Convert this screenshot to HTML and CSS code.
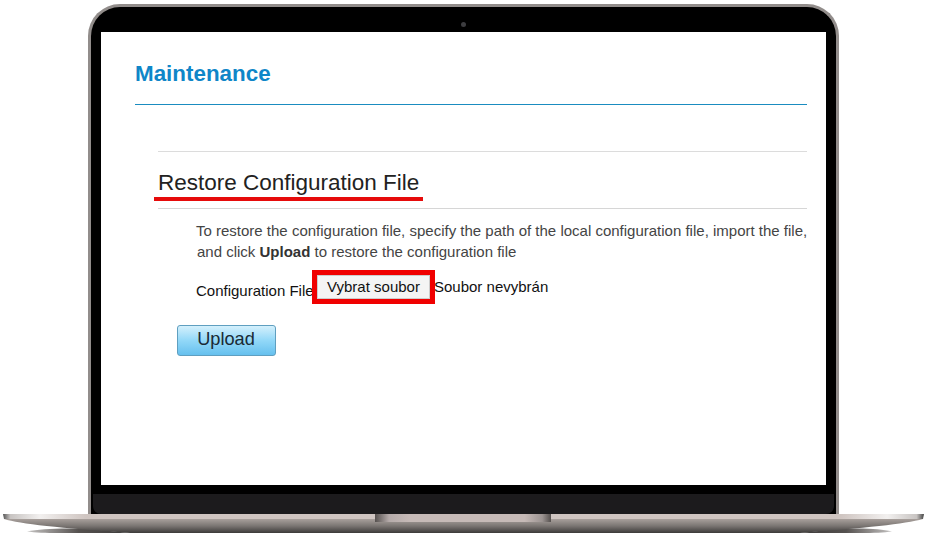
FILE: index.html
```html
<!DOCTYPE html>
<html lang="en">
  <head>
    <meta charset="UTF-8" />
    <meta name="viewport" content="width=device-width, initial-scale=1.0" />
    <title>Maintenance</title>
    <link rel="stylesheet" href="styles.css">
  </head>
  <body>
    <div class="laptop">
      <div class="lid">
        <div class="camera-row"><span class="camera"></span></div>
        <div class="screen">
          <h1>Maintenance</h1>
          <div class="section">
            <h2><span class="marked">Restore Configuration File</span></h2>
            <div class="section-body">
              <p class="intro">To restore the configuration file, specify the path of the local configuration file, import the file,</p>
              <p class="intro second">and click <strong>Upload</strong> to restore the configuration file</p>
              <div class="file-row">
                <label class="file-label">Configuration File</label>
                <span class="file-mark"><span class="file-button">Vybrat soubor</span></span>
                <span class="file-name">Soubor nevybrán</span>
              </div>
            </div>
            <button class="upload">Upload</button>
          </div>
        </div>
        <div class="chin"></div>
      </div>
      <svg class="base" width="927" height="23" viewBox="0 0 927 23">
        <defs>
          <linearGradient id="body" x1="0" y1="0" x2="0" y2="1">
            <stop offset="0" stop-color="#a8a09c" />
            <stop offset="0.5" stop-color="#7a7572" />
            <stop offset="1" stop-color="#3c3a39" />
          </linearGradient>
          <linearGradient id="top" x1="0" y1="0" x2="1" y2="0">
            <stop offset="0" stop-color="#555" />
            <stop offset="0.008" stop-color="#c8c4c2" />
            <stop offset="0.04" stop-color="#f2f0ef" />
            <stop offset="0.09" stop-color="#cfc5c1" />
            <stop offset="0.91" stop-color="#cfc5c1" />
            <stop offset="0.96" stop-color="#f2f0ef" />
            <stop offset="0.992" stop-color="#c8c4c2" />
            <stop offset="1" stop-color="#444" />
          </linearGradient>
          <linearGradient id="notch" x1="0" y1="0" x2="1" y2="0">
            <stop offset="0" stop-color="#55504e" />
            <stop offset="0.08" stop-color="#b5abaa" />
            <stop offset="0.2" stop-color="#c6bab7" />
            <stop offset="0.85" stop-color="#c6bab7" />
            <stop offset="0.95" stop-color="#9c9492" />
            <stop offset="1" stop-color="#55504e" />
          </linearGradient>
          <linearGradient id="shadow-left" x1="0" y1="0" x2="1" y2="0">
            <stop offset="0" stop-color="#c4c2c1" />
            <stop offset="0.5" stop-color="#55514f" />
            <stop offset="1" stop-color="#3c3a39" />
          </linearGradient>
          <linearGradient id="shadow-right" x1="0" y1="0" x2="1" y2="0">
            <stop offset="0" stop-color="#3c3a39" />
            <stop offset="0.5" stop-color="#55514f" />
            <stop offset="1" stop-color="#c4c2c1" />
          </linearGradient>
        </defs>
        <path d="M27 17.5 C40 15 60 14 90 15 L130 19 H60 C45 19 35 18.5 27 17.5 Z" fill="url(#shadow-left)" />
        <path d="M800 19 L837 15 C867 14 880 15 892 17.5 C884 18.5 874 19 860 19 Z" fill="url(#shadow-right)" />
        <path d="M4 5 C20 10 60 14 130 19 H800 C865 14 905 10 923 5 Z" fill="url(#body)" />
        <path d="M3 0 H924 L923 5 H4 Z" fill="url(#top)" />
        <rect x="375" y="0" width="176" height="8" fill="url(#notch)" />
      </svg>
    </div>
  </body>
</html>
```

FILE: styles.css
```css
html,
body {
  margin: 0;
  background: white;
}
body {
  width: 927px;
  height: 537px;
  overflow: hidden;
  font-family: "Liberation Sans", Arial, sans-serif;
}
.laptop {
  padding-top: 4px;
}
.lid {
  box-sizing: border-box;
  width: 751px;
  height: 510px;
  margin-left: 88px;
  background: black;
  border: 3px solid #928d8b;
  border-bottom: 0;
  border-radius: 32px 32px 0 0;
  padding: 0 10px;
}
.camera-row {
  display: flex;
  justify-content: center;
  align-items: center;
  height: 25px;
  padding: 9px 1px 0 0;
  box-sizing: border-box;
}
.camera {
  width: 5px;
  height: 5px;
  border-radius: 50%;
  background: #3d3d40;
}
.screen {
  box-sizing: border-box;
  height: 453px;
  background: white;
  padding: 29px 19px 0 34px;
}
.chin {
  height: 20px;
  margin: 9px -8px 0;
  background: #1c1b1d;
  border-radius: 0 0 8px 8px;
}
.base {
  display: block;
}
h1 {
  margin: 0;
  height: 43px;
  font-size: 22.4px;
  line-height: 25px;
  font-weight: bold;
  color: #0f86c8;
  border-bottom: 1px solid #1a8cc0;
}
.section {
  margin: 46px 0 0 23px;
  border-top: 1px solid #dcdcdc;
}
h2 {
  margin: 0;
  height: 57px;
  box-sizing: border-box;
  padding-top: 18px;
  font-size: 22.5px;
  line-height: 26px;
  font-weight: normal;
  color: #222;
  border-bottom: 1px solid #d6d6d6;
}
.marked {
  display: inline-block;
  margin-left: -4px;
  padding: 0 4px;
  height: 27px;
  border-bottom: 4px solid #e60b0b;
}
.section-body {
  padding: 11px 0 0 38px;
}
.intro {
  margin: 0;
  font-size: 15px;
  line-height: 22px;
  color: #444;
  white-space: nowrap;
}
.intro.second {
  margin: -1px 0 0 1px;
}
.intro strong {
  color: #333;
}
.file-row {
  display: flex;
  align-items: flex-start;
  margin-top: 7px;
  font-size: 15px;
  color: #111;
}
.file-label {
  width: 116px;
  padding-top: 12px;
  line-height: 17px;
  white-space: nowrap;
}
.file-mark {
  display: block;
  border: 5px solid #f00000;
}
.file-button {
  display: block;
  box-sizing: border-box;
  width: 113px;
  height: 24px;
  line-height: 22px;
  text-align: center;
  font-size: 15px;
  color: #111;
  background: #f4f4f4;
  border: 1px solid #ccc;
}
.file-name {
  margin-left: -1px;
  padding-top: 8px;
  line-height: 17px;
  white-space: nowrap;
}
.upload {
  display: block;
  box-sizing: border-box;
  width: 99px;
  height: 31px;
  margin: 21px 0 0 19px;
  padding: 0 1px 3px 0;
  font-family: inherit;
  font-size: 18.2px;
  color: #1a2a35;
  background: linear-gradient(#d4f0fc, #92d8f8 50%, #66c0ee);
  border: 1px solid #5f9fc0;
  border-radius: 3px;
}
```
